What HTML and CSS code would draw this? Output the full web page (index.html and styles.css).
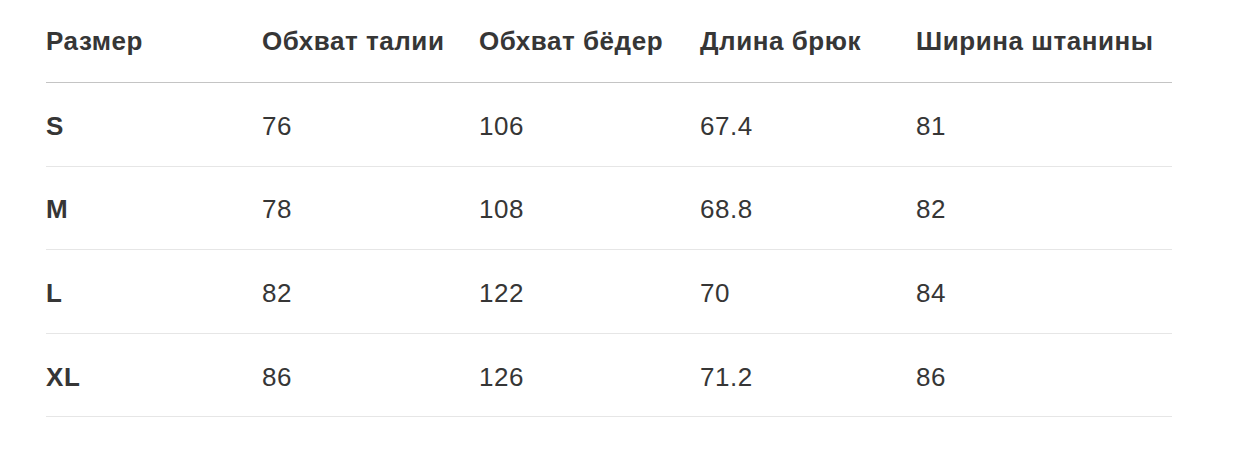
FILE: index.html
```html
<!DOCTYPE html>
<html lang="ru">
<head>
<meta charset="utf-8">
<link rel="stylesheet" href="styles.css">
</head>
<body>
<div class="wrap">
<table class="size-table">
  <colgroup>
    <col class="c1"><col class="c2"><col class="c3"><col class="c4"><col class="c5">
  </colgroup>
  <thead>
    <tr><th>Размер</th><th>Обхват талии</th><th>Обхват бёдер</th><th>Длина брюк</th><th>Ширина штанины</th></tr>
  </thead>
  <tbody>
    <tr><td class="size">S</td><td>76</td><td>106</td><td>67.4</td><td>81</td></tr>
    <tr><td class="size">M</td><td>78</td><td>108</td><td>68.8</td><td>82</td></tr>
    <tr><td class="size">L</td><td>82</td><td>122</td><td>70</td><td>84</td></tr>
    <tr><td class="size">XL</td><td>86</td><td>126</td><td>71.2</td><td>86</td></tr>
  </tbody>
</table>
</div>
</body>
</html>
```

FILE: styles.css
```css
html, body {
  margin: 0;
  padding: 0;
  background: #fff;
}
.wrap {
  padding: 0 80px 0 46px;
}
.size-table {
  width: 1126px;
  border-collapse: collapse;
  table-layout: fixed;
  font-family: "Liberation Sans", Arial, sans-serif;
  font-size: 26px;
  letter-spacing: 0.55px;
  color: #363636;
}
.c1 { width: 216px; }
.c2 { width: 217px; }
.c3 { width: 221px; }
.c4 { width: 216px; }
.c5 { width: 256px; }
.size-table th,
.size-table td {
  text-align: left;
  padding: 0;
  vertical-align: middle;
}
.size-table th {
  height: 82px;
  font-weight: 700;
  border-bottom: 1px solid #c4c4c4;
}
.size-table td {
  height: 78.6px;
  padding-top: 4px;
  font-weight: 400;
  border-bottom: 1px solid #e6e6e6;
}
.size-table td.size {
  font-weight: 700;
}
```
